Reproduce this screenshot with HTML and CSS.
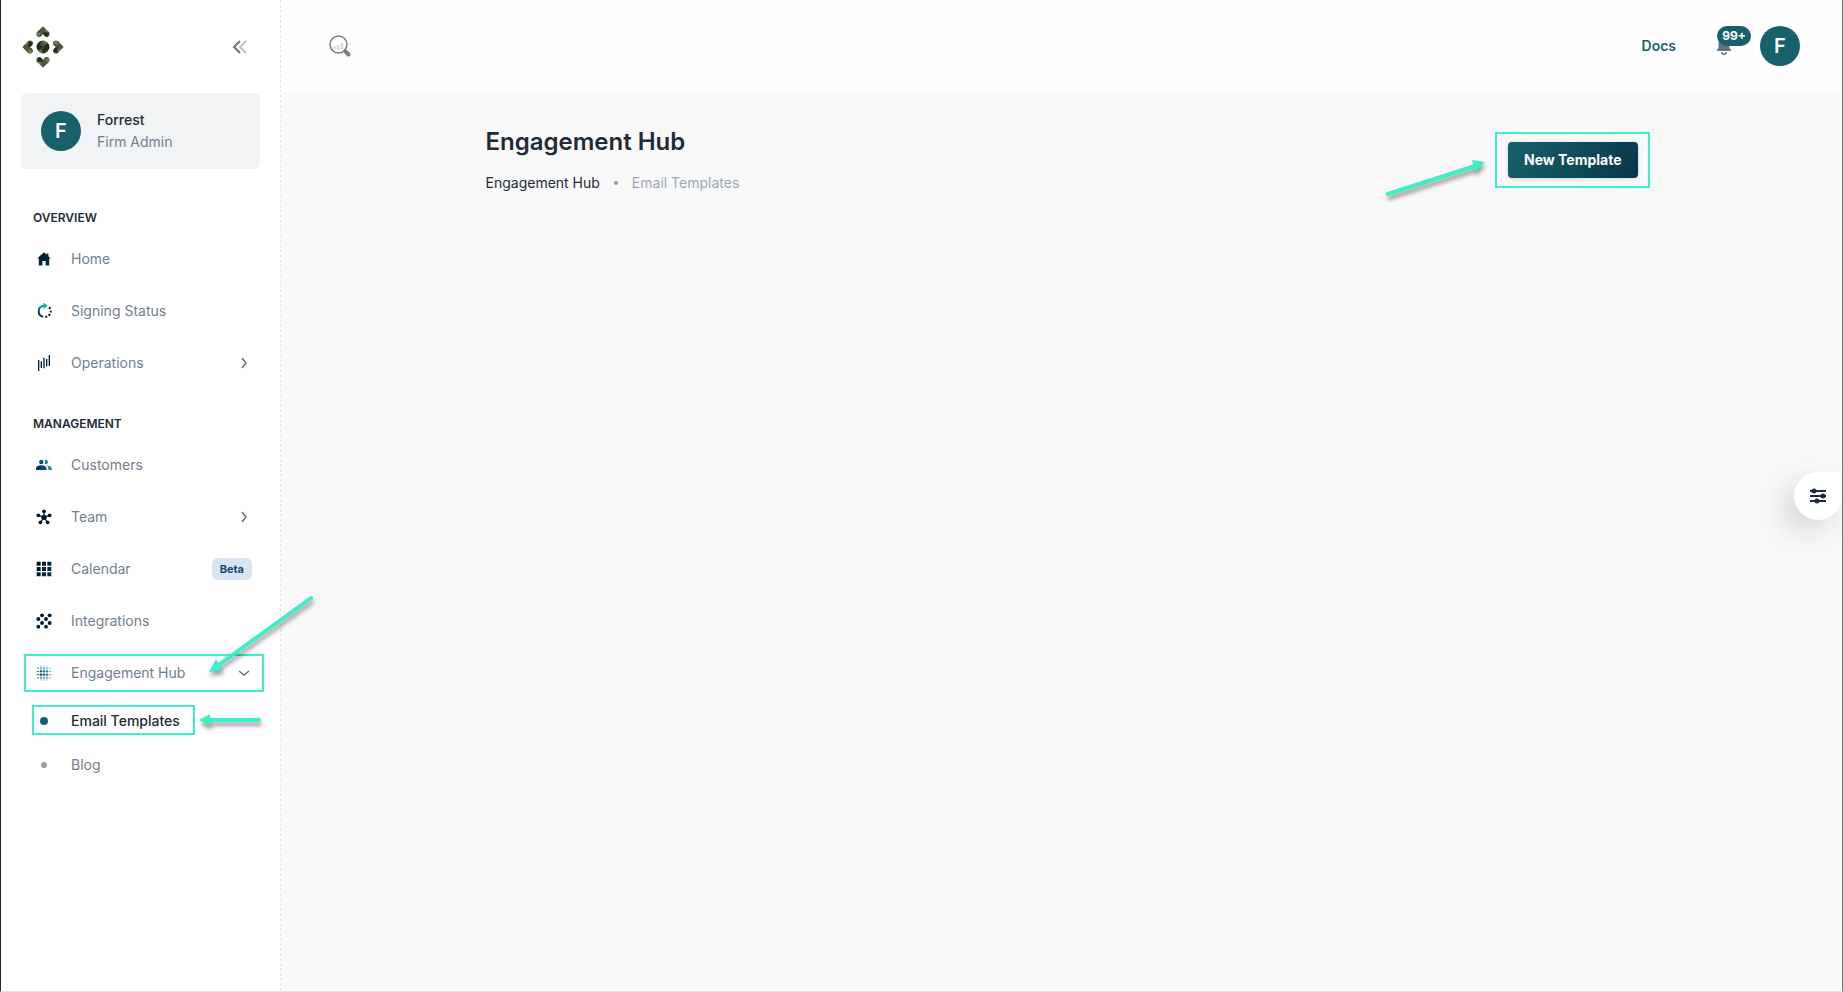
FILE: index.html
```html
<!DOCTYPE html>
<html lang="en">

<head>
    <meta charset="utf-8">
    <title>Engagement Hub</title>
    <link rel="stylesheet" href="styles.css">
</head>

<body>
    <svg class="defs" aria-hidden="true">
        <defs>
            <linearGradient id="navy" x1="0" y1="0" x2="1" y2="1">
                <stop offset="0" stop-color="#00101c" />
                <stop offset="1" stop-color="#003450" />
            </linearGradient>
            <linearGradient id="teal" gradientUnits="userSpaceOnUse" x1="4" y1="16" x2="21" y2="9">
                <stop offset="0" stop-color="#003050" />
                <stop offset="0.5" stop-color="#0a5f7a" />
                <stop offset="1" stop-color="#10b5aa" />
            </linearGradient>
            <linearGradient id="ring" gradientUnits="userSpaceOnUse" x1="6" y1="19" x2="13" y2="5">
                <stop offset="0" stop-color="#002c48" />
                <stop offset="0.5" stop-color="#0a5f7a" />
                <stop offset="1" stop-color="#10b5aa" />
            </linearGradient>
            <pattern id="camo" width="14" height="14" patternUnits="userSpaceOnUse">
                <rect width="14" height="14" fill="#4c573e" />
                <path d="M0 0h6l-2 4 3 3-4 3-3-2zM9 5l4-2 1 6-4 2-3 3-1-4z" fill="#232a1b" />
                <path d="M8 0h4l-1 3-3 1zM2 11l3-1 1 3-3 1z" fill="#6f7b60" />
            </pattern>
            <path id="heart" d="M0 -6 6 -.5C7.500 2 6 4.500 4 4.500 2 4.500 1 3 0 1.500-1 3-2 4.500-4 4.500-6 4.500-7.500 2-6 -.5z" />
        </defs>
    </svg>

    <div class="app">
        <aside class="sidebar">
            <div class="brand">
                <a href="#" aria-label="Dashboard">
                    <svg width="42" height="42" viewBox="0 0 42 42" fill="url(#camo)">
                        <circle cx="21" cy="21" r="6.500" />
                        <use href="#heart" transform="translate(21 6.500)" />
                        <use href="#heart" transform="translate(35.500 21) rotate(90)" />
                        <use href="#heart" transform="translate(21 35.500) rotate(180)" />
                        <use href="#heart" transform="translate(6.500 21) rotate(270)" />
                    </svg>
                </a>
                <button class="collapse" aria-label="Collapse menu">
                    <svg width="16" height="14" viewBox="0 0 16 14" fill="none" stroke-width="2">
                        <path d="M8 1 2 7l6 6" stroke="#637381" />
                        <path d="M14 1 8 7l6 6" stroke="#b9c1c9" />
                    </svg>
                </button>
            </div>

            <div class="account">
                <span class="avatar">F</span>
                <div>
                    <div class="account-name">Forrest</div>
                    <div class="account-role">Firm Admin</div>
                </div>
            </div>

            <nav>
                <h2>Overview</h2>
                <ul>
                    <li><a href="#" class="item">
                        <svg viewBox="2 2 20 20" fill="url(#navy)"><path d="M12 3.500 3.500 11.500H5.500V20H10V14.500h4V20h4.500v-8.500h2L17.500 8.700V5h-2v1.800z" /></svg>
                        <span>Home</span>
                    </a></li>
                    <li><a href="#" class="item">
                        <svg viewBox="2 2 20 20" fill="none">
                            <path d="M13 5.500H11.500a7 7 0 0 0-.5 13.800" stroke="url(#ring)" stroke-width="2.500" />
                            <path d="M11.500 1.500 16.500 5.500l-5 4z" fill="#12a9a5" />
                            <path d="M13.500 19.300a7 7 0 0 0 3.500-13" stroke="#00192a" stroke-width="2.500" stroke-dasharray="2.500 2" />
                        </svg>
                        <span>Signing Status</span>
                    </a></li>
                    <li><a href="#" class="item">
                        <svg viewBox="0 0 24 24" fill="none" stroke="#00233a" stroke-width="2"><path d="M4 7.500V24M8 9.500v10M12 4V20M16 6v11M20 0v16.500" /></svg>
                        <span>Operations</span>
                        <svg class="chevron" viewBox="0 0 16 16"><path d="m6 3 4 5-4 5" /></svg>
                    </a></li>
                </ul>

                <h2>Management</h2>
                <ul>
                    <li><a href="#" class="item">
                        <svg viewBox="0 0 24 24" fill="url(#teal)"><circle cx="8" cy="7.500" r="3.300" /><path d="M0 19.500v-2C0 13.500 5 12.500 8 12.500s8 1 8 5v2zM13 4.700a3.300 3.300 0 1 1 0 5.600 5 5 0 0 0 0-5.600zM16 12.700c3 .2 8 1.500 8 4.800v2h-5.500v-2c0-2-.8-3.600-2.500-4.800z" /></svg>
                        <span>Customers</span>
                    </a></li>
                    <li><a href="#" class="item">
                        <svg viewBox="0 0 24 24" fill="#00192a" stroke="#00192a">
                            <path d="M12 12V4M12 12 4 10M12 12l8-2M12 12l-5 8M12 12l5 8" stroke-width="1.800" />
                            <g stroke="none"><circle cx="12" cy="12.500" r="4" /><circle cx="12" cy="3.500" r="2.800" /><circle cx="3.500" cy="9.500" r="2.800" /><circle cx="20.500" cy="9.500" r="2.800" /><circle cx="6.500" cy="20" r="2.800" /><circle cx="17.500" cy="20" r="2.800" /></g>
                        </svg>
                        <span>Team</span>
                        <svg class="chevron" viewBox="0 0 16 16"><path d="m6 3 4 5-4 5" /></svg>
                    </a></li>
                    <li><a href="#" class="item">
                        <svg viewBox="0 0 24 24" fill="url(#navy)"><path d="M1 1h6v6H1zM9 1h6v6H9zM17 1h6v6h-6zM1 9h6v6H1zM9 9h6v6H9zM17 9h6v6h-6zM1 17h6v6H1zM9 17h6v6H9zM17 17h6v6h-6z" /></svg>
                        <span>Calendar</span>
                        <span class="beta">Beta</span>
                    </a></li>
                    <li><a href="#" class="item">
                        <svg viewBox="0 0 24 24" fill="#00192a">
                            <circle cx="9" cy="3.500" r="2.900" /><circle cx="20.500" cy="3.500" r="2.900" />
                            <circle cx="3.500" cy="9" r="2.900" /><circle cx="15" cy="9" r="2.900" />
                            <circle cx="9" cy="15" r="2.900" /><circle cx="20.500" cy="15" r="2.900" />
                            <circle cx="3.500" cy="20.500" r="2.900" /><circle cx="15" cy="20.500" r="2.900" />
                        </svg>
                        <span>Integrations</span>
                    </a></li>
                    <li><a href="#" class="item">
                        <svg viewBox="0 0 24 24" fill="none" stroke="url(#teal)" stroke-linecap="round">
                            <path d="M3 4.500h.01M3 9.500h.01M3 14.500h.01M3 19.500h.01M21 4.500h.01M21 9.500h.01M21 14.500h.01M21 19.500h.01M7.500 4.500h.01M12 4.500h.01M16.500 4.500h.01M7.500 19.500h.01M12 19.500h.01M16.500 19.500h.01" stroke-width="2" />
                            <path d="M7.500 9.500h.01M12 9.500h.01M16.500 9.500h.01M7.500 14.500h.01M12 14.500h.01M16.500 14.500h.01" stroke-width="3.200" />
                            <path d="M7.500 1v22M12 0v24M16.500 1v22M1 9.500h22M1 14.500h22" stroke-width="0.500" />
                        </svg>
                        <span>Engagement Hub</span>
                        <svg class="chevron" viewBox="0 0 16 16"><path d="m3 6 5 4 5-4" /></svg>
                        <i class="mark mark-hub"></i>
                        <svg class="arrow arrow-hub" viewBox="0 0 110 84"><path d="M106 5 15 71" /><path class="head" d="M4 79 11 66 18 77z" /></svg>
                    </a></li>
                    <li><a href="#" class="item sub active">
                        <i class="dot"></i>
                        <span>Email Templates</span>
                        <i class="mark mark-email"></i>
                        <svg class="arrow arrow-email" viewBox="0 0 70 20"><path d="M63 10H12" /><path class="head" d="M3 10 14 4V16z" /></svg>
                    </a></li>
                    <li><a href="#" class="item sub">
                        <i class="dot"></i>
                        <span>Blog</span>
                    </a></li>
                </ul>
            </nav>
        </aside>

        <div class="page">
            <header class="topbar">
                <button class="search" aria-label="Search">
                    <svg width="22" height="22" viewBox="0 0 22 22" fill="none">
                        <path d="M5.500 14v-3M9 15v-5M13 14.500V8" stroke="#dddddd" stroke-width="2.500" />
                        <circle cx="9.500" cy="9.500" r="8.500" stroke="#7c7c7c" stroke-width="1.500" />
                        <path d="m15 15 2 2" stroke="#7c7c7c" stroke-width="2" />
                        <path d="m16.500 16.500 3 3" stroke="#7c7c7c" stroke-width="4" stroke-linecap="round" />
                    </svg>
                </button>
                <a href="#" class="docs">Docs</a>
                <button class="bell" aria-label="Notifications">
                    <svg width="16" height="20" viewBox="0 0 16 20" fill="#637381"><path d="M1 15v-1l1.500-2V7a5.500 5.500 0 0 1 11 0v5l1.500 2v1zM5 16h6a3 3 0 0 1-6 0z" /><path d="M6.500 16h3a1.500 1.500 0 0 1-3 0z" fill="#fff" /></svg>
                    <span class="count">99+</span>
                </button>
                <button class="avatar" aria-label="Account">F</button>
            </header>

            <main>
                <div class="heading">
                    <div>
                        <h1>Engagement Hub</h1>
                        <div class="crumbs">
                            <a href="#">Engagement Hub</a>
                            <i></i>
                            <span>Email Templates</span>
                        </div>
                    </div>
                    <div class="action">
                        <button class="primary">New Template</button>
                        <i class="mark mark-new"></i>
                        <svg class="arrow arrow-new" viewBox="0 0 106 44"><path d="M5 36 92 8" /><path class="head" d="M102 4 89 2 92 14z" /></svg>
                    </div>
                </div>
            </main>
        </div>
    </div>

    <button class="settings" aria-label="Settings">
        <svg width="18" height="16" viewBox="0 0 18 16" fill="#212b36"><path d="M1 2h16v2H1zM1 7h16v2H1zM1 12h16v2H1z" /><circle cx="5" cy="3" r="2.500" /><circle cx="14" cy="8" r="2.500" /><circle cx="8" cy="13" r="2.500" /></svg>
    </button>
</body>

</html>
```
FILE: styles.css
```css
* {
    box-sizing: border-box;
}

body {
    margin: 0;
    font-family: Inter, "Liberation Sans", sans-serif;
    font-size: 14px;
    line-height: 22px;
    color: #212b36;
    background-color: #f9f9f9;
}

button {
    padding: 0;
    border: none;
    background: none;
    font: inherit;
    cursor: pointer;
}

a {
    color: inherit;
    text-decoration: none;
}

svg {
    display: block;
}

.defs {
    position: absolute;
    width: 0;
    height: 0;
}

.app {
    display: flex;
    min-height: 100vh;
    border-left: 1px solid #24282a;
    border-right: 1px solid #777777;
    border-bottom: 1px solid #e0e0e0;
}

/* Sidebar */
.sidebar {
    flex: none;
    width: 280px;
    padding: 0 16px;
    background-color: #ffffff;
    border-right: 1px dashed #e2e4e7;
}

.brand {
    display: flex;
    align-items: center;
    justify-content: space-between;
    height: 93px;
    padding: 0 16px 0 5px;
}

.account {
    display: flex;
    align-items: center;
    gap: 16px;
    height: 76px;
    margin: 0 4px 12px;
    padding: 0 20px;
    border-radius: 6px;
    background-color: #f1f3f5;
}

.account-name {
    font-weight: 500;
}

.account-role {
    color: #72808d;
}

.avatar {
    flex: none;
    width: 40px;
    height: 40px;
    border-radius: 50%;
    background-color: #17616a;
    color: #ffffff;
    font-size: 20px;
    font-weight: 600;
    line-height: 40px;
    text-align: center;
}

nav h2 {
    margin: 0;
    padding: 28px 16px 8px;
    font-size: 12px;
    font-weight: 600;
    line-height: 18px;
    text-transform: uppercase;
}

nav ul {
    margin: 0;
    padding: 0;
    list-style: none;
}

.item {
    position: relative;
    display: flex;
    align-items: center;
    height: 48px;
    margin-bottom: 4px;
    padding: 0 12px 0 19px;
    color: #72808d;
}

nav li:last-child .item {
    margin-bottom: 0;
}

.item > svg:first-child {
    width: 16px;
    height: 16px;
    margin-right: 19px;
}

.item .chevron {
    width: 16px;
    height: 16px;
    margin-left: auto;
    fill: none;
    stroke: #637381;
    stroke-width: 1.5;
}

.beta {
    height: 22px;
    margin-left: auto;
    padding: 0 8px;
    border-radius: 6px;
    background-color: #d8e5f0;
    color: #134685;
    font-size: 11px;
    font-weight: 700;
}

.sub {
    height: 40px;
}

.dot {
    width: 6px;
    height: 6px;
    margin: 0 24px 0 5px;
    border-radius: 50%;
    background-color: #919eab;
}

.sub.active {
    color: #212b36;
    font-weight: 500;
}

.active .dot {
    width: 8px;
    height: 8px;
    margin: 0 23px 0 4px;
    background-color: #17616a;
}

/* Callouts */
.mark {
    position: absolute;
    border: 2px solid #3cefc9;
    pointer-events: none;
}

.mark-hub {
    inset: 5px 0 5px 7px;
}

.mark-email {
    inset: 4px 69px 6px 15px;
}

.mark-new {
    inset: -10px -12px -10px -13px;
}

.arrow {
    position: absolute;
    z-index: 1;
    overflow: visible;
    fill: none;
    stroke: #3cefc9;
    stroke-width: 4;
    stroke-linecap: round;
    filter: drop-shadow(1px 4px 2px rgba(0, 0, 0, 0.4));
    pointer-events: none;
}

.arrow .head {
    fill: #3cefc9;
    stroke: none;
}

.arrow-hub {
    left: 188px;
    bottom: 20px;
    width: 110px;
    height: 84px;
}

.arrow-email {
    left: 179px;
    top: 9px;
    width: 70px;
    height: 20px;
}

.arrow-new {
    right: 149px;
    top: 16px;
    width: 106px;
    height: 44px;
}

/* Page */
.page {
    flex: 1;
    min-width: 0;
}

.topbar {
    display: flex;
    align-items: center;
    height: 92px;
    padding: 0 42px 0 48px;
    background-color: #fefefe;
}

.docs {
    margin-left: auto;
    color: #17616a;
    font-weight: 600;
}

.bell {
    position: relative;
    margin: 0 28px 0 40px;
}

.count {
    position: absolute;
    top: -10px;
    left: 1px;
    width: 34px;
    height: 20px;
    border-radius: 10px;
    background-color: #17616a;
    color: #ffffff;
    font-size: 12px;
    font-weight: 700;
    line-height: 20px;
    text-align: center;
}

main {
    max-width: 1200px;
    margin: 0 auto;
    padding: 32px 24px;
}

.heading {
    display: flex;
    align-items: flex-end;
    justify-content: space-between;
}

h1 {
    margin: 0 0 12px;
    font-size: 24px;
    font-weight: 600;
    line-height: 36px;
}

.crumbs {
    display: flex;
    align-items: center;
    gap: 14px;
}

.crumbs i {
    width: 4px;
    height: 4px;
    border-radius: 50%;
    background-color: #919eab;
}

.crumbs span {
    color: #9ba7b3;
}

.action {
    position: relative;
    margin-bottom: 16px;
}

.primary {
    display: block;
    height: 36px;
    padding: 0 16px;
    border-radius: 4px;
    background: linear-gradient(120deg, #17616a, #0a3649);
    box-shadow: 0 1px 4px rgba(0, 0, 0, 0.15);
    color: #ffffff;
    font-weight: 700;
}

.settings {
    position: fixed;
    top: 50%;
    right: 1px;
    display: flex;
    align-items: center;
    width: 48px;
    height: 48px;
    margin-top: -24px;
    padding-left: 15px;
    border-radius: 24px 0 24px 24px;
    background-color: #ffffff;
    box-shadow: -12px 12px 32px -4px rgba(99, 115, 129, 0.35);
}
```
